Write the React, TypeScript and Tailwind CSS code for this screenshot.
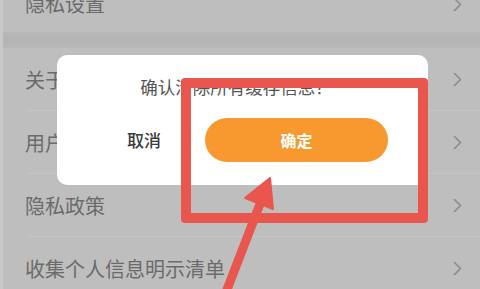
const font = { fontFamily: '"Noto Sans CJK SC", "Noto Sans", sans-serif' };

function Chevron() {
  return (
    <svg width="9" height="15" viewBox="0 0 9 15" className="shrink-0">
      <polyline points="1.5,1.5 7.5,7.5 1.5,13.5" fill="none" stroke="#8c8c8c" strokeWidth="1.6" strokeLinecap="round" strokeLinejoin="round" />
    </svg>
  );
}

function Row({ label, divider = true }: { label: string; divider?: boolean }) {
  return (
    <div className="relative flex h-[63px] items-center justify-between pl-[22px] pr-[18px]">
      <span className="text-[20px] text-[#6b6b6b]">{label}</span>
      <Chevron />
      {divider && <div className="absolute bottom-0 left-[25px] right-0 h-px bg-[#c6c6c6]" />}
    </div>
  );
}

export default function App() {
  return (
    <div className="relative h-[289px] w-[480px] overflow-hidden border-l-[3px] border-[#c9c9c9] bg-[#bebebe]" style={font}>
      {/* SETTINGS LIST */}
      <div className="-mt-[24px] flex h-[56px] items-center justify-between pl-[22px] pr-[18px]">
        <span className="text-[20px] text-[#6b6b6b]">隐私设置</span>
        <Chevron />
      </div>
      <div className="h-[16px] bg-gradient-to-b from-[#b9b9b9] via-[#b3b3b3] to-[#b8b8b8]" />
      <Row label="关于我们" />
      <Row label="用户协议" />
      <Row label="隐私政策" />
      <Row label="收集个人信息明示清单" divider={false} />

      {/* DIALOG */}
      <div className="absolute left-[54px] top-[55px] flex h-[130px] w-[371px] flex-col rounded-[10px] bg-white">
        <div className="pr-[12px] pt-[20px] text-center text-[17.5px] leading-[24px] text-[#555555]">
          确认清除所有缓存信息？
        </div>
        <div className="mt-[19px] flex items-center pl-[26px]">
          <div className="w-[122px] text-center text-[17px] font-medium text-[#3c3c3c]">取消</div>
          <div className="flex h-[44px] w-[183px] items-center justify-center rounded-full bg-[#f8992f] text-[16px] font-bold text-white">
            确定
          </div>
        </div>
      </div>

      {/* HIGHLIGHT */}
      <div className="absolute left-[178px] top-[78px] h-[145px] w-[247px] rounded-[4px] border-[10px] border-[#e9564e]" />
      <svg className="absolute left-0 top-0" width="477" height="289" viewBox="0 0 477 289">
        <line x1="220" y1="300" x2="257" y2="204" stroke="#e9564e" strokeWidth="9" strokeLinecap="round" />
        <polygon points="267,178 242,198 270,209" fill="#e9564e" strokeLinejoin="round" stroke="#e9564e" strokeWidth="2" />
      </svg>
    </div>
  );
}
